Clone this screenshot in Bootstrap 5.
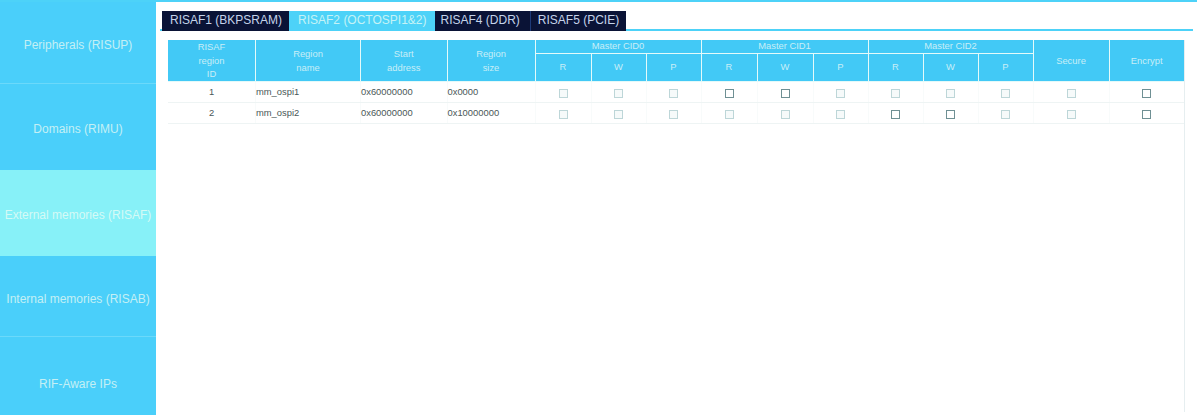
<!DOCTYPE html>
<html lang="en">
<head>
  <meta charset="UTF-8">
  <title>RIF configuration</title>
  <link href="https://cdn.jsdelivr.net/npm/bootstrap@5.3.2/dist/css/bootstrap.min.css" rel="stylesheet">
  <style>
    html, body { height: 415px; overflow: hidden; }
    body {
      font-family: "Liberation Sans", Arial, sans-serif;
      background: #fff;
      border-top: 2px solid #4dd2f8;
    }
    .app-shell { height: 413px; }

    .side-menu { width: 156px; flex: none; background: #4acffa; }
    .side-item {
      color: #c4eff5;
      font-size: 12px;
      white-space: nowrap;
    }
    .side-item.is-active { background: #87f1f8; color: #d5faf6; }
    .side-rule { border-bottom: 1px solid #6bd9fa; }
    .h-82 { height: 82px; }
    .h-86 { height: 86px; }
    .h-81 { height: 81px; }
    .h-78 { height: 78px; }
    .pt-6px { padding-top: 6px; }

    .main-pane { padding: 9px 4px 0 4px; }
    .tab-strip { height: 20px; padding-left: 2px; border-bottom: 2px solid #4dd2f8; }
    .rif-tab {
      background: #0a1336;
      color: #c4d3ea;
      font-size: 12px;
      line-height: 19px;
      height: 20px;
      padding: 0 7px 0 8px;
      white-space: nowrap;
    }
    .rif-tab + .rif-tab { border-left: 1px solid #1e3a78; }
    .rif-tab.is-current { background: #4dd2f8; color: #c4f2f6; border-left: 0; padding: 0 8px 0 9px; }
    .rif-tab:nth-child(3) { padding: 0 10px 0 6px; border-left: 0; }
    .rif-tab:nth-child(4) { padding: 0 7px; }

    .table-wrap {
      margin: 9px 0 0 8px;
      width: 1017px;
      height: 372px;
      border-right: 1px solid #e6eef0;
    }
    .risaf-grid { width: 1016px; table-layout: fixed; margin: 0; border-collapse: collapse; }
    .risaf-grid th {
      background: #42c9f6;
      color: #c8eef6;
      font-size: 9.4px;
      font-weight: 400;
      line-height: 13.5px;
      text-align: center;
      vertical-align: middle;
      padding: 1px 0 0 0;
      border: 1px solid #e4fafa;
      border-top: 0;
    }
    .risaf-grid th:first-child, .risaf-grid td:first-child { border-left: 0; }
    .risaf-grid th:last-child, .risaf-grid td:last-child { border-right: 0; }
    .risaf-grid .top-row th:first-child { padding: 0; }
    .risaf-grid .top-row th[colspan] { height: 13px; padding: 0; line-height: 12px; }
    .risaf-grid .sub-row th { height: 27px; padding: 0; }
    .risaf-grid td {
      height: 21px;
      padding: 1px 0 0 0;
      font-size: 9.4px;
      line-height: 12px;
      color: #4a5858;
      vertical-align: middle;
      border: 0;
      border-right: 1px solid #f8fbfb;
      border-bottom: 1px solid #eef4f4;
      background: #fff;
    }
    .tick-box {
      display: block;
      width: 9px;
      height: 9px;
      margin: 2px auto 0 auto;
      border: 1px solid #bdd6d8;
      background: #f6fafa;
    }
    .tick-box.is-dark { border-color: #6f9094; background: #fff; }
  </style>
</head>
<body>
  <div class="d-flex app-shell">
    <div class="side-menu d-flex flex-column">
      <div class="side-item side-rule h-82 pt-1 d-flex align-items-center justify-content-center">Peripherals (RISUP)</div>
      <div class="side-item h-86 pt-1 d-flex align-items-center justify-content-center">Domains (RIMU)</div>
      <div class="side-item is-active h-86 pt-1 d-flex align-items-center justify-content-center">External memories (RISAF)</div>
      <div class="side-item side-rule h-81 pt-6px d-flex align-items-center justify-content-center">Internal memories (RISAB)</div>
      <div class="side-item h-78 pt-3 d-flex align-items-center justify-content-center">RIF-Aware IPs</div>
    </div>

    <div class="main-pane flex-grow-1">
      <div class="tab-strip d-flex">
        <div class="rif-tab">RISAF1 (BKPSRAM)</div>
        <div class="rif-tab is-current">RISAF2 (OCTOSPI1&amp;2)</div>
        <div class="rif-tab">RISAF4 (DDR)</div>
        <div class="rif-tab">RISAF5 (PCIE)</div>
      </div>

      <div class="table-wrap">
        <table class="table risaf-grid">
          <colgroup id="grid-cols"></colgroup>
          <thead>
            <tr class="top-row">
              <th rowspan="2">RISAF<br>region<br>ID</th>
              <th rowspan="2">Region<br>name</th>
              <th rowspan="2">Start<br>address</th>
              <th rowspan="2">Region<br>size</th>
              <th colspan="3">Master CID0</th>
              <th colspan="3">Master CID1</th>
              <th colspan="3">Master CID2</th>
              <th rowspan="2">Secure</th>
              <th rowspan="2">Encrypt</th>
            </tr>
            <tr class="sub-row">
              <th>R</th><th>W</th><th>P</th>
              <th>R</th><th>W</th><th>P</th>
              <th>R</th><th>W</th><th>P</th>
            </tr>
          </thead>
          <tbody id="grid-body"></tbody>
        </table>
      </div>
    </div>
  </div>

  <script src="https://cdn.jsdelivr.net/npm/bootstrap@5.3.2/dist/js/bootstrap.bundle.min.js"></script>
  <script>
    const COL_WIDTHS = [87.5, 105, 86.5, 88, 56, 55, 55, 56, 56, 55, 55, 55, 55, 76, 75];
    const ROWS = [
      { id: 1, name: "mm_ospi1", start: "0x60000000", size: "0x0000", dark: [3, 4, 10] },
      { id: 2, name: "mm_ospi2", start: "0x60000000", size: "0x10000000", dark: [6, 7, 10] }
    ];

    document.getElementById("grid-cols").innerHTML =
      COL_WIDTHS.map(w => `<col style="width:${w}px">`).join("");

    document.getElementById("grid-body").innerHTML = ROWS.map(row => {
      let boxes = "";
      for (let i = 0; i < 11; i++) {
        const cls = row.dark.includes(i) ? "tick-box is-dark" : "tick-box";
        boxes += `<td><span class="${cls}"></span></td>`;
      }
      return `<tr>
        <td class="text-center">${row.id}</td>
        <td>${row.name}</td>
        <td>${row.start}</td>
        <td>${row.size}</td>
        ${boxes}
      </tr>`;
    }).join("");
  </script>
</body>
</html>
